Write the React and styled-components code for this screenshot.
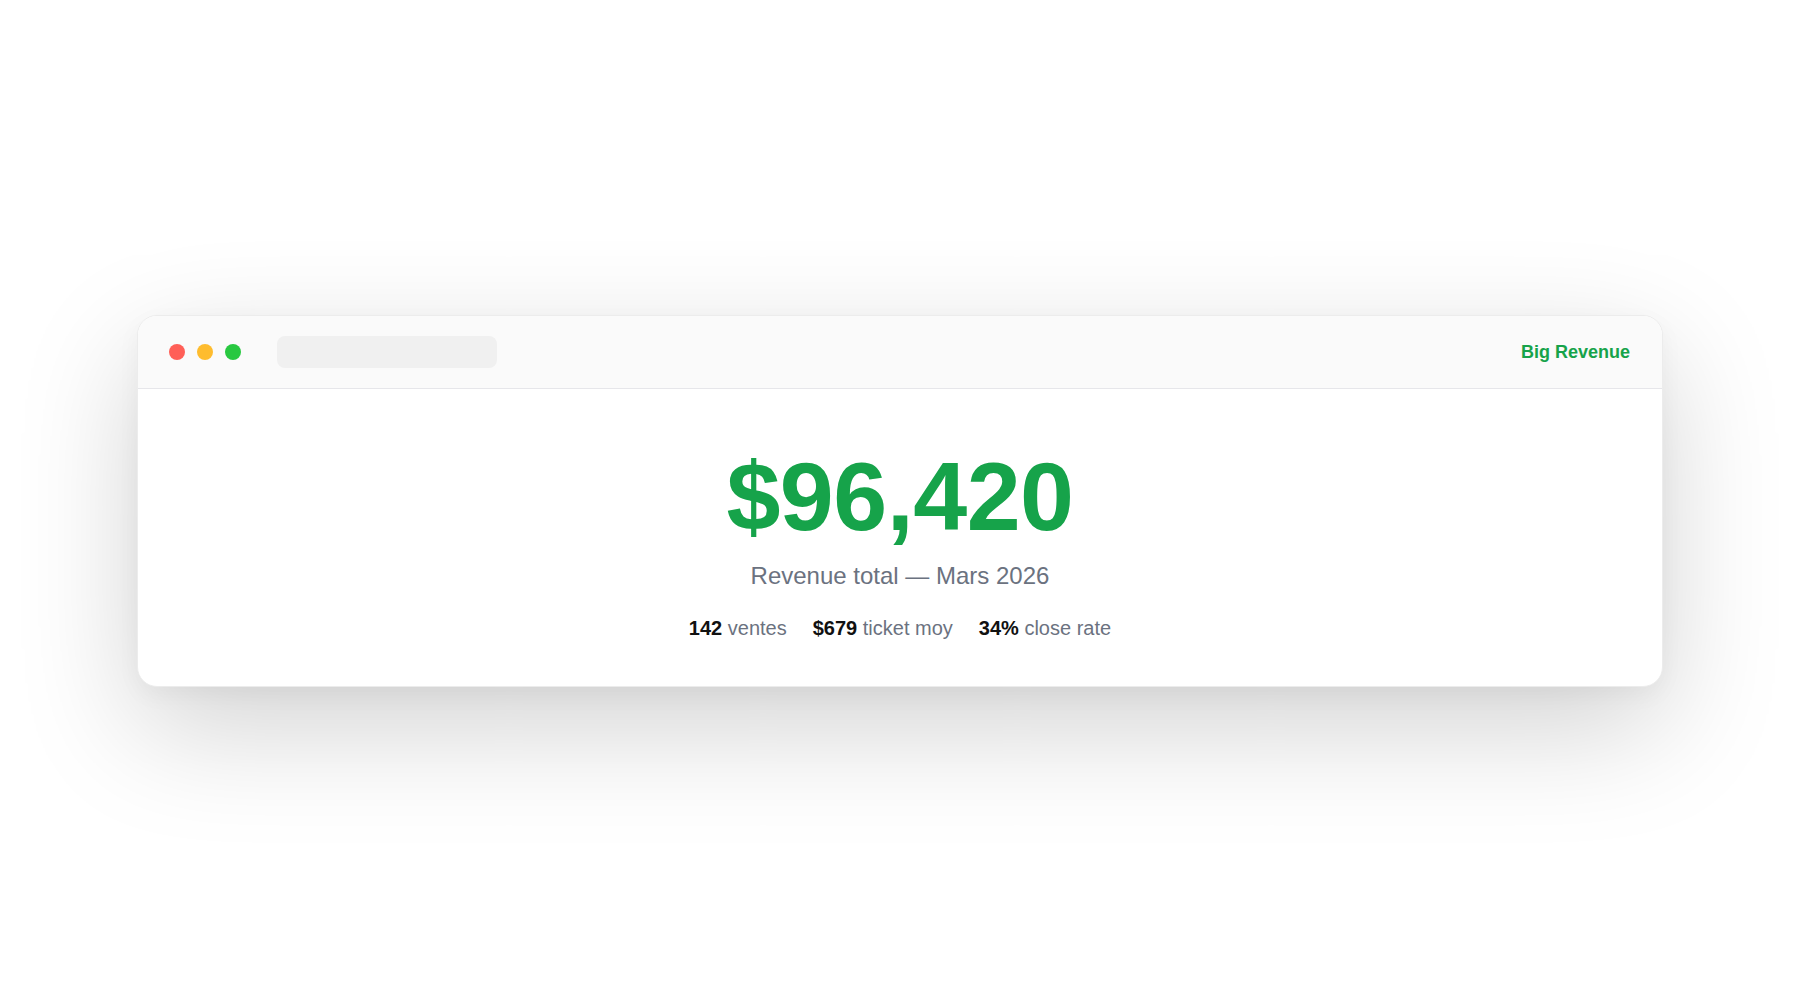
import React from "react";
import styled, { createGlobalStyle } from "styled-components";

const GlobalStyle = createGlobalStyle`
  html, body {
    margin: 0;
    padding: 0;
    background: #ffffff;
  }
  body {
    font-family: "Liberation Sans", Arial, Helvetica, sans-serif;
  }
`;

const Page = styled.div`
  min-height: 100vh;
  box-sizing: border-box;
  display: flex;
  align-items: center;
  justify-content: center;
  padding: 2px 137px 0;
`;

const Window = styled.div`
  width: 100%;
  box-sizing: border-box;
  background: #ffffff;
  border: 1px solid #ececec;
  border-radius: 20px;
  overflow: hidden;
  box-shadow: 0 40px 120px rgba(0, 0, 0, 0.18), 0 8px 24px rgba(0, 0, 0, 0.04);
`;

const TitleBar = styled.div`
  height: 72px;
  box-sizing: content-box;
  display: flex;
  align-items: center;
  padding: 0 32px 0 31px;
  background: #fafafa;
  border-bottom: 1px solid #e6e6ea;
`;

const Dots = styled.div`
  display: flex;
  gap: 12px;
`;

const Dot = styled.span`
  width: 16px;
  height: 16px;
  border-radius: 50%;
  background: ${(p) => p.$color};
`;

const UrlBar = styled.div`
  width: 220px;
  height: 32px;
  margin-left: 36px;
  border-radius: 8px;
  background: #f0f0f0;
`;

const Brand = styled.div`
  margin-left: auto;
  padding-top: 1px;
  font-size: 18px;
  font-weight: 700;
  color: #16a34a;
`;

const Body = styled.div`
  display: flex;
  flex-direction: column;
  align-items: center;
  padding: 60px 0 46px;
`;

const Amount = styled.div`
  font-size: 97px;
  line-height: 96px;
  font-weight: 700;
  color: #16a34a;
  letter-spacing: -0.5px;
`;

const Subtitle = styled.div`
  margin-top: 17px;
  font-size: 24px;
  line-height: 28px;
  color: #6b7280;
`;

const Stats = styled.div`
  margin-top: 27px;
  display: flex;
  gap: 26px;
  font-size: 20px;
  line-height: 23px;
`;

const Stat = styled.span`
  color: #6b7280;
`;

const StatValue = styled.strong`
  font-weight: 700;
  color: #111111;
`;

const stats = [
  { value: "142", label: "ventes" },
  { value: "$679", label: "ticket moy" },
  { value: "34%", label: "close rate" },
];

export default function App() {
  return (
    <>
      <GlobalStyle />
      <Page>
        <Window>
          <TitleBar>
            <Dots>
              <Dot $color="#ff5f57" />
              <Dot $color="#febc2e" />
              <Dot $color="#28c840" />
            </Dots>
            <UrlBar />
            <Brand>Big Revenue</Brand>
          </TitleBar>
          <Body>
            <Amount>$96,420</Amount>
            <Subtitle>Revenue total — Mars 2026</Subtitle>
            <Stats>
              {stats.map((s) => (
                <Stat key={s.label}>
                  <StatValue>{s.value}</StatValue> {s.label}
                </Stat>
              ))}
            </Stats>
          </Body>
        </Window>
      </Page>
    </>
  );
}
